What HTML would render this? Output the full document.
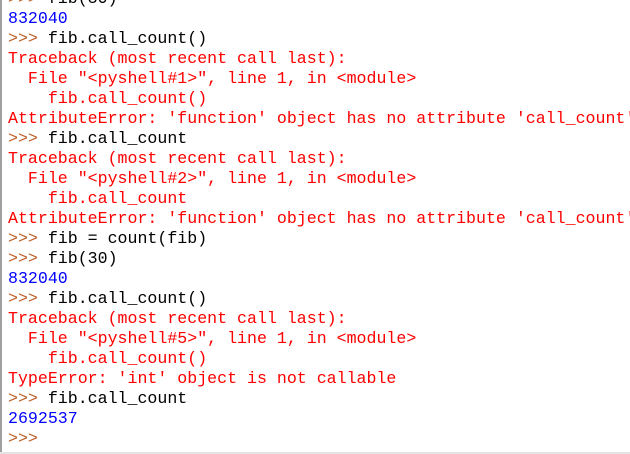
<!DOCTYPE html>
<html><head><meta charset="utf-8"><style>
html,body{margin:0;padding:0;background:#fff;width:630px;height:454px;overflow:hidden}
#bar{position:absolute;left:0;top:0;width:2px;height:454px;background:#a0a0a0}
#bot{position:absolute;left:0;bottom:0;width:630px;height:2px;background:#e4e4e4}
pre{position:absolute;left:8px;top:-11px;margin:0;font-family:"Liberation Mono","Noto Sans CJK SC",monospace;font-size:16.6px;line-height:20px;color:#000;white-space:pre}
.o{color:#0000ff}.p{color:#c0602a}.e{color:#ff0000}
</style></head><body><div id="bar"></div><div id="bot"></div>
<pre><span class="p">&gt;&gt;&gt; </span>fib(30)
<span class="o">832040</span>
<span class="p">&gt;&gt;&gt; </span>fib.call_count()
<span class="e">Traceback (most recent call last):
  File "&lt;pyshell#1&gt;", line 1, in &lt;module&gt;
    fib.call_count()
AttributeError: 'function' object has no attribute 'call_count'</span>
<span class="p">&gt;&gt;&gt; </span>fib.call_count
<span class="e">Traceback (most recent call last):
  File "&lt;pyshell#2&gt;", line 1, in &lt;module&gt;
    fib.call_count
AttributeError: 'function' object has no attribute 'call_count'</span>
<span class="p">&gt;&gt;&gt; </span>fib = count(fib)
<span class="p">&gt;&gt;&gt; </span>fib(30)
<span class="o">832040</span>
<span class="p">&gt;&gt;&gt; </span>fib.call_count()
<span class="e">Traceback (most recent call last):
  File "&lt;pyshell#5&gt;", line 1, in &lt;module&gt;
    fib.call_count()
TypeError: 'int' object is not callable</span>
<span class="p">&gt;&gt;&gt; </span>fib.call_count
<span class="o">2692537</span>
<span class="p">&gt;&gt;&gt; </span></pre>
</body></html>
